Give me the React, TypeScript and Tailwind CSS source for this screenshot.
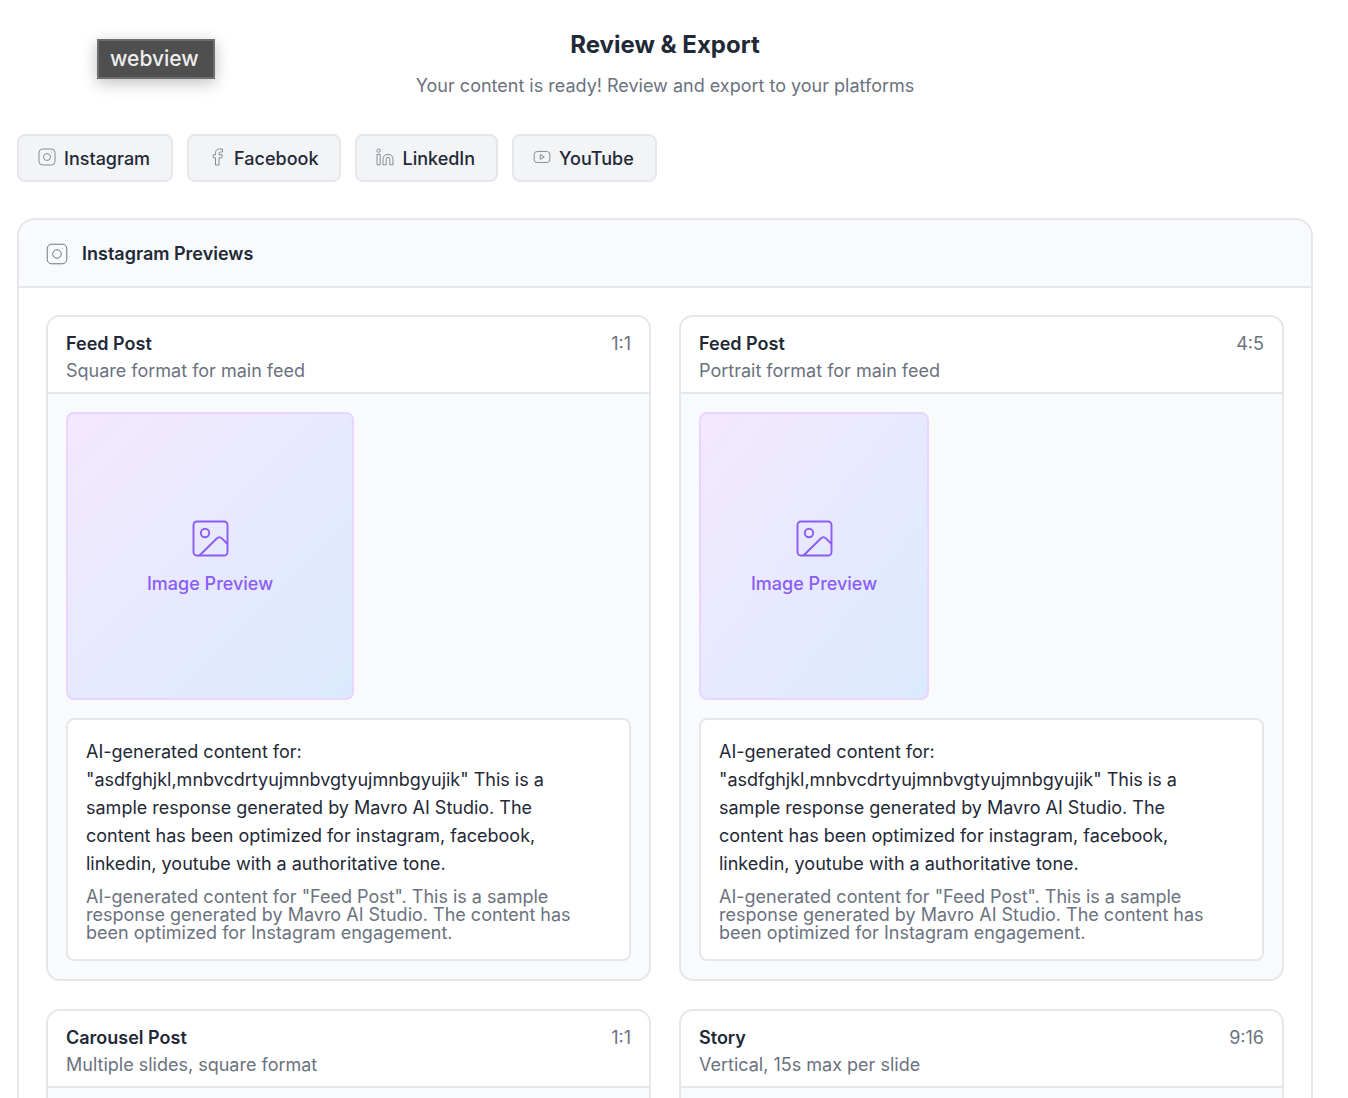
import type { ComponentType, ReactNode } from "react";

type IconProps = { className?: string };

function LineIcon({ className = "", children }: IconProps & { children: ReactNode }) {
  return (
    <svg
      viewBox="0 0 18 18"
      className={`shrink-0 ${className}`}
      fill="none"
      stroke="currentColor"
      strokeWidth="0.8"
      strokeLinejoin="round"
      aria-hidden="true"
    >
      {children}
    </svg>
  );
}

const InstagramIcon = (props: IconProps) => (
  <LineIcon {...props}>
    <rect x="1" y="1" width="16" height="16" rx="3.600" />
    <circle cx="9" cy="9" r="3.500" />
    <circle cx="13.500" cy="4.500" r="0.400" fill="currentColor" stroke="none" />
  </LineIcon>
);

const FacebookIcon = (props: IconProps) => (
  <LineIcon {...props}>
    <path d="M7.500 17V9.800H5.200V6.800H7.500V4.800C7.500 2.200 9.200 1 11.500 1H14.500V4H12.400Q11 4 11 5.400V6.800H14.300L13.800 9.800H11V17Z" />
  </LineIcon>
);

const LinkedInIcon = (props: IconProps) => (
  <LineIcon {...props}>
    <circle cx="2.600" cy="2.600" r="1.700" />
    <path d="M1 6.400H4.200V16.800H1Z" />
    <path d="M7 16.800V11.300C7 8.200 9 6.300 12 6.300S17 8.200 17 11.300V16.800H13.800V11.300Q13.800 9.400 12 9.400T10.200 11.300V16.800Z" />
  </LineIcon>
);

const YouTubeIcon = (props: IconProps) => (
  <LineIcon {...props}>
    <path d="M3.300 3.700Q9 3 14.700 3.700Q16.700 4 16.800 6V12Q16.700 14 14.700 14.300Q9 15 3.300 14.300Q1.300 14 1.200 12V6Q1.300 4 3.300 3.700Z" />
    <path d="M7.300 6.700V11.300L11.300 9Z" />
  </LineIcon>
);

const platforms: { name: string; Icon: ComponentType<IconProps> }[] = [
  { name: "Instagram", Icon: InstagramIcon },
  { name: "Facebook", Icon: FacebookIcon },
  { name: "LinkedIn", Icon: LinkedInIcon },
  { name: "YouTube", Icon: YouTubeIcon },
];

const posts = [
  { title: "Feed Post", note: "Square format for main feed", ratio: "1:1", size: "w-72" },
  { title: "Feed Post", note: "Portrait format for main feed", ratio: "4:5", size: "w-[230px]" },
  { title: "Carousel Post", note: "Multiple slides, square format", ratio: "1:1", size: "w-72" },
  { title: "Story", note: "Vertical, 15s max per slide", ratio: "9:16", size: "w-[162px]" },
];

function ImageIcon() {
  return (
    <svg viewBox="0 0 38 38" className="size-[38px]" fill="none" stroke="currentColor" strokeWidth="1.900" aria-hidden="true">
      <rect x="2.500" y="2.500" width="34" height="34" rx="3.500" />
      <circle cx="14" cy="14" r="4.200" />
      <path d="M8.500 36.500L25.500 19.700Q28.500 17 31.200 19.700L36.500 25" />
    </svg>
  );
}

function PostCard({ title, note, ratio, size }: (typeof posts)[number]) {
  return (
    <article className="overflow-hidden rounded-[14px] border-2 border-[#e5e7eb] bg-[#f9fafb]">
      <header className="border-b-2 border-[#e5e7eb] bg-white px-[18px] pt-[13px] pb-2">
        <div className="flex items-center justify-between leading-7">
          <h3 className="font-semibold">{title}</h3>
          <span className="text-[#6b7280]">{ratio}</span>
        </div>
        <p className="leading-[26px] text-[#6b7280]">{note}</p>
      </header>
      <div className="flex flex-col gap-[18px] p-[18px]">
        <div
          className={`flex h-72 flex-col items-center justify-center gap-[13px] rounded-lg border-2 border-[#e9d5ff] bg-linear-to-br/srgb from-[#f3e8ff] to-[#dbeafe] pt-1 text-[#8b5cf6] ${size}`}
        >
          <ImageIcon />
          <span className="leading-7 font-medium">Image Preview</span>
        </div>
        <div className="rounded-lg border-2 border-[#e5e7eb] bg-white pt-[18px] pr-9 pb-[17px] pl-[18px]">
          <p className="leading-7">
            AI-generated content for: "asdfghjkl,mnbvcdrtyujmnbvgtyujmnbgyujik" This is a sample response generated by
            Mavro AI Studio. The content has been optimized for instagram, facebook, linkedin, youtube with a
            authoritative tone.
          </p>
          <p className="mt-[10px] leading-[18px] text-[#6b7280]">
            AI-generated content for "{title}". This is a sample response generated by Mavro AI Studio. The content has
            been optimized for Instagram engagement.
          </p>
        </div>
      </div>
    </article>
  );
}

export default function App() {
  return (
    <div className="h-screen overflow-hidden bg-white font-['Inter',sans-serif] text-lg text-[#1f2937]">
      <div
        role="tooltip"
        className="absolute top-[39px] left-[97px] border-2 border-[#6e6e6e] bg-[#4f4f4f] pt-1 pr-[14px] pb-1 pl-[11px] text-[21px] leading-7 font-medium text-[#eeeeee] shadow-[0_4px_16px_rgba(0,0,0,0.25)]"
      >
        webview
      </div>
      <main className="pr-[35px] pl-[17px]">
        <header className="pt-[29px] text-center">
          <h1 className="text-2xl font-bold">Review &amp; Export</h1>
          <p className="mt-[11px] leading-7 text-[#6b7280]">Your content is ready! Review and export to your platforms</p>
        </header>
        <nav className="mt-[34px] flex gap-[14px]">
          {platforms.map(({ name, Icon }) => (
            <button
              key={name}
              type="button"
              className="flex h-12 items-center gap-2 rounded-lg border-2 border-[#e5e7eb] bg-[#f3f4f6] pt-px pr-[21px] pl-[19px] font-medium"
            >
              <Icon className="mb-[3px] size-[18px] text-[#6b7280]" />
              {name}
            </button>
          ))}
        </nav>
        <section className="mt-9 overflow-hidden rounded-[18px] border-2 border-[#e5e7eb]">
          <h2 className="flex h-[68px] items-center gap-[14px] border-b-2 border-[#e5e7eb] bg-[#f9fafb] px-[27px] pt-px font-semibold">
            <InstagramIcon className="size-[22px] text-[#6b7280]" />
            Instagram Previews
          </h2>
          <div className="grid grid-cols-2 gap-7 p-[27px]">
            {posts.map((post, i) => (
              <PostCard key={i} {...post} />
            ))}
          </div>
        </section>
      </main>
    </div>
  );
}
